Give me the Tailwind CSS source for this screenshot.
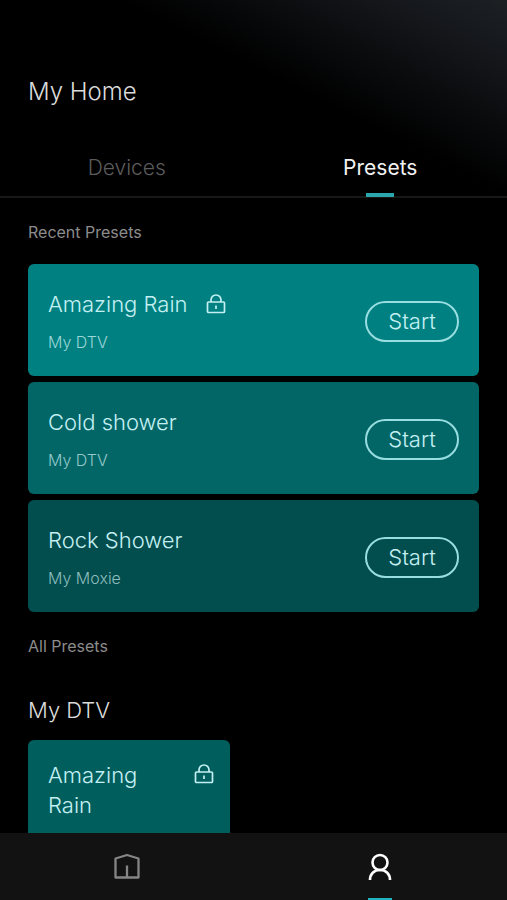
<!DOCTYPE html>
<html lang="en">
<head>
  <meta charset="UTF-8" />
  <title>My Home</title>
  <meta name="viewport" content="width=device-width, initial-scale=1.0" />

  <!-- Tailwind CSS -->
  <script src="https://cdn.jsdelivr.net/npm/@tailwindcss/browser@4"></script>
</head>
<body class="h-screen flex flex-col overflow-hidden bg-black font-['Inter','Liberation_Sans',sans-serif] font-light text-[#dcdcdc]">

  <!-- Header -->
  <header class="shrink-0 border-b-2 border-[#16181a] bg-[linear-gradient(207deg,#1c2124_0px,#14161a_60px,#0a0b0d_115px,#000_175px)]">
    <h1 class="px-7 pt-19 text-2xl">My Home</h1>
    <nav class="mt-7 grid grid-cols-2 text-[21px] leading-7">
      <a href="#devices" class="pt-[18px] pb-[14px] text-center text-[#5c5c5c]">Devices</a>
      <a href="#presets" class="relative pt-[18px] pb-[14px] text-center font-normal text-[#f2f2f2]">
        Presets
        <span class="absolute -bottom-px left-1/2 h-1 w-7 -translate-x-1/2 bg-[#2ba6ac]"></span>
      </a>
    </nav>
  </header>

  <!-- Main Content -->
  <main class="min-h-0 flex-1 overflow-hidden px-7">
    <h2 class="pt-[22px] text-base font-normal text-[#8c8c8c]">Recent Presets</h2>

    <ul class="mt-5 flex flex-col gap-1.5 text-[#c4f0f3]">
      <li class="flex items-center justify-between rounded-md bg-[#008080] px-5 pt-6 pb-[22px]">
        <div>
          <h3 class="flex items-center gap-[18px] text-[22px] leading-8">
            Amazing Rain
            <svg class="h-5 w-5" viewBox="0 0 20 20" fill="none" stroke="currentColor" stroke-width="1.7">
              <rect x="1.5" y="8" width="17" height="10.5" rx="1"></rect>
              <path d="M5 8V6a5 5 0 0 1 10 0v2M10 11.5v3.5"></path>
            </svg>
          </h3>
          <p class="mt-2.5 text-base text-[#9bd6d8]">My DTV</p>
        </div>
        <button type="button" class="h-[41px] w-[94px] rounded-full border-2 border-[#98dee1] text-[22px]">Start</button>
      </li>
      <li class="flex items-center justify-between rounded-md bg-[#036666] px-5 pt-6 pb-[22px]">
        <div>
          <h3 class="text-[22px] leading-8">Cold shower</h3>
          <p class="mt-2.5 text-base text-[#93c8ca]">My DTV</p>
        </div>
        <button type="button" class="h-[41px] w-[94px] rounded-full border-2 border-[#98dee1] text-[22px]">Start</button>
      </li>
      <li class="flex items-center justify-between rounded-md bg-[#024d4d] px-5 pt-6 pb-[22px]">
        <div>
          <h3 class="text-[22px] leading-8">Rock Shower</h3>
          <p class="mt-2.5 text-base text-[#8dbdbf]">My Moxie</p>
        </div>
        <button type="button" class="h-[41px] w-[94px] rounded-full border-2 border-[#98dee1] text-[22px]">Start</button>
      </li>
    </ul>

    <h2 class="mt-[22px] text-base font-normal text-[#8c8c8c]">All Presets</h2>
    <h3 class="mt-9 text-[22px] leading-8">My DTV</h3>

    <div class="mt-3.5 grid grid-cols-[202px]">
      <div class="flex h-28 items-start justify-between rounded-md bg-[#005e5d] pt-5 pr-4 pl-5 text-[#c4f0f3]">
        <h4 class="w-24 text-[22px] leading-[30px]">Amazing Rain</h4>
        <svg class="mt-1 h-5 w-5" viewBox="0 0 20 20" fill="none" stroke="currentColor" stroke-width="1.7">
          <rect x="1.5" y="8" width="17" height="10.5" rx="1"></rect>
          <path d="M5 8V6a5 5 0 0 1 10 0v2M10 11.5v3.5"></path>
        </svg>
      </div>
    </div>
  </main>

  <!-- Bottom Navigation -->
  <nav class="grid h-[67px] shrink-0 grid-cols-2 bg-[#121212]">
    <a href="#home" aria-label="Home" class="flex items-center justify-center text-[#858585]">
      <svg class="h-7 w-7" viewBox="0 0 28 28" fill="none" stroke="currentColor" stroke-width="2.3" stroke-linejoin="round">
        <path d="M2.5 5.5L14 2l11.500 3.500V24.500H2.500zM14 24.500V12.500"></path>
      </svg>
    </a>
    <a href="#profile" aria-label="Profile" class="relative flex items-center justify-center text-white">
      <svg class="h-7 w-7" viewBox="0 0 28 28" fill="none" stroke="currentColor" stroke-width="2.6">
        <circle cx="14" cy="9.500" r="7.500"></circle>
        <path d="M4 27c0-6 4-10 10-10s10 4 10 10"></path>
      </svg>
      <span class="absolute bottom-0 left-1/2 h-0.5 w-6 -translate-x-1/2 bg-[#20b4bd]"></span>
    </a>
  </nav>

</body>
</html>
